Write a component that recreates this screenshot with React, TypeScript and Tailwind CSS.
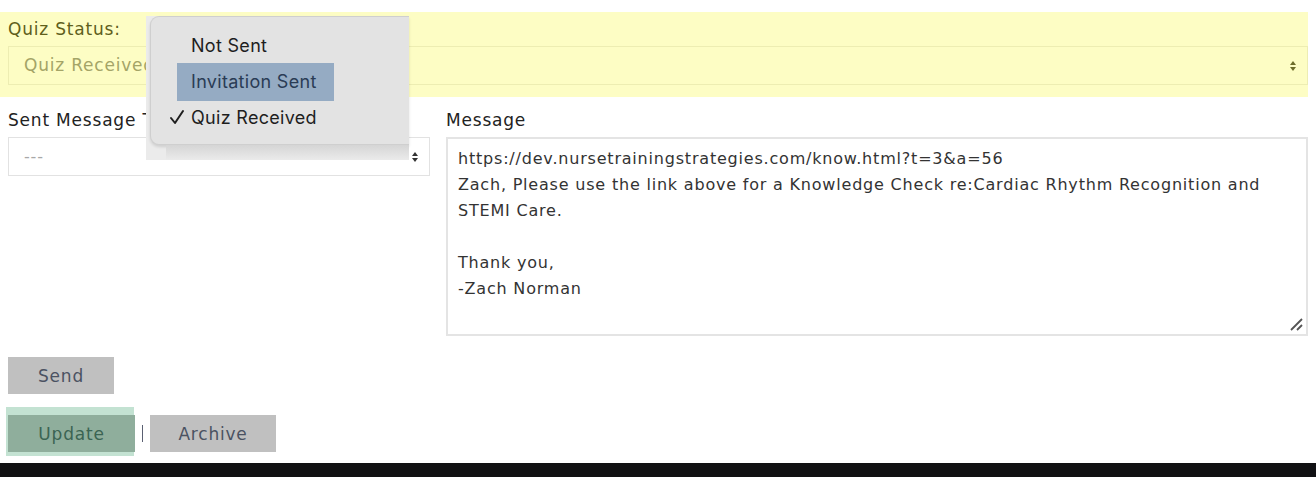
import React from "react";

const mont = { fontFamily: '"DejaVu Sans", "Liberation Sans", sans-serif', letterSpacing: "0.8px" };

function Arrows({ color }: { color: string }) {
  return (
    <svg width="8" height="12" viewBox="0 0 8 12" className="shrink-0">
      <path d="M4 1 L7 5 L1 5 Z" fill={color} />
      <path d="M4 11 L7 7 L1 7 Z" fill={color} />
    </svg>
  );
}

export default function App() {
  const message =
    "https://dev.nursetrainingstrategies.com/know.html?t=3&a=56\nZach, Please use the link above for a Knowledge Check re:Cardiac Rhythm Recognition and STEMI Care.\n\nThank you,\n-Zach Norman";
  return (
    <div className="relative w-[1316px] h-[477px] bg-white overflow-hidden flex flex-col text-[16px]" style={mont}>
      <div className="h-[12px]" />
      {/* yellow band */}
      <div className="w-[1308px] bg-[#fdfdc4] pl-2 pt-[5px] pb-3">
        <div className="h-[24px] leading-[24px] text-[17px] text-[#5f5f1c]">Quiz Status:</div>
        <div className="mt-[5px] h-[39px] border border-[#ededb2] flex items-center justify-between pl-[15px] pr-[10px]">
          <span className="text-[#a4a467] text-[17px] pt-[1px]">Quiz Received</span>
          <Arrows color="#6d6d2a" />
        </div>
      </div>

      {/* two columns */}
      <div className="mt-[10px] pl-2 w-[1308px] grid grid-cols-[422px_1fr] gap-4">
        <div className="flex flex-col">
          <div className="h-[24px] leading-[24px] pt-[1px] text-[17px] text-[#222]">Sent Message To</div>
          <div className="mt-[6px] h-[39px] border border-[#e2e2e2] flex items-center justify-between pl-[15px] pr-[10px]">
            <span className="text-[#a8a8a8]">---</span>
            <Arrows color="#333" />
          </div>
        </div>
        <div className="flex flex-col">
          <div className="h-[24px] leading-[24px] pt-[1px] text-[17px] text-[#222]">Message</div>
          <div className="relative mt-[6px] h-[199px] border-2 border-[#e4e4e4] pl-[10px] pr-3 pt-[7px] leading-[26px] text-[#333] whitespace-pre-wrap">
            {message}
            <svg width="16" height="16" viewBox="0 0 16 16" className="absolute right-[2px] bottom-[2px]">
              <path d="M3 14 L14 3 M9 14 L14 9" stroke="#555" strokeWidth="1.8" />
            </svg>
          </div>
        </div>
      </div>

      {/* Send */}
      <div className="pl-2 mt-[21px]">
        <button className="w-[106px] h-[37px] pt-[3px] bg-[#c0c0c0] text-[#4b5262] text-[17px]" style={mont}>Send</button>
      </div>

      {/* Update | Archive */}
      <div className="pl-2 mt-[21px] flex items-center">
        <div className="relative">
          <div className="absolute left-[-2px] top-[-8px] w-[128px] h-[49px] bg-[#c3e2d2]" />
          <button className="relative w-[127px] h-[37px] pt-[3px] bg-[#8fae9c] text-[#3b6453] text-[17px]" style={mont}>Update</button>
        </div>
        <span className="w-[1px] h-[17px] bg-[#5a6072] ml-[7px]" />
        <button className="ml-[7px] w-[126px] h-[37px] pt-[3px] bg-[#c0c0c0] text-[#4b5262] text-[17px]" style={mont}>Archive</button>
      </div>

      <div className="flex-1" />
      <div className="h-[14px] bg-[#111113]" />

      {/* native select popup menu */}
      <div className="absolute left-[146px] top-[16px] w-[263px] h-[144px] bg-[#ebebeb]">
        <div className="absolute left-[4px] top-0 w-[259px] h-[129px] rounded-l-[9px] border border-r-0 border-[#cfcfcf] bg-[#e3e3e3] shadow-[0_2px_3px_rgba(0,0,0,0.12)]" />
        <div className="absolute left-[20px] top-[129px] w-[243px] h-[15px] bg-gradient-to-b from-[#d5d5d5] to-[#ebebeb]" />
        <div className="absolute left-0 top-0 w-full h-full" style={{ fontFamily: 'Inter, "Noto Sans", sans-serif', letterSpacing: "0.3px" }}>
          <div className="absolute left-[45px] top-[19px] text-[18px] leading-[22px] text-[#1e1e1e]">Not Sent</div>
          <div className="absolute left-[31px] top-[47px] w-[157px] h-[38px] bg-[#95abc3]" />
          <div className="absolute left-[45px] top-[55px] text-[18px] leading-[22px] text-[#2a3c55]">Invitation Sent</div>
          <svg width="16" height="16" viewBox="0 0 16 16" className="absolute left-[23px] top-[93px]">
            <path d="M2 9 L6 14 L14 2" fill="none" stroke="#1e1e1e" strokeWidth="2" strokeLinecap="round" strokeLinejoin="round" />
          </svg>
          <div className="absolute left-[45px] top-[91px] text-[18px] leading-[22px] text-[#1e1e1e]">Quiz Received</div>
        </div>
      </div>
    </div>
  );
}
